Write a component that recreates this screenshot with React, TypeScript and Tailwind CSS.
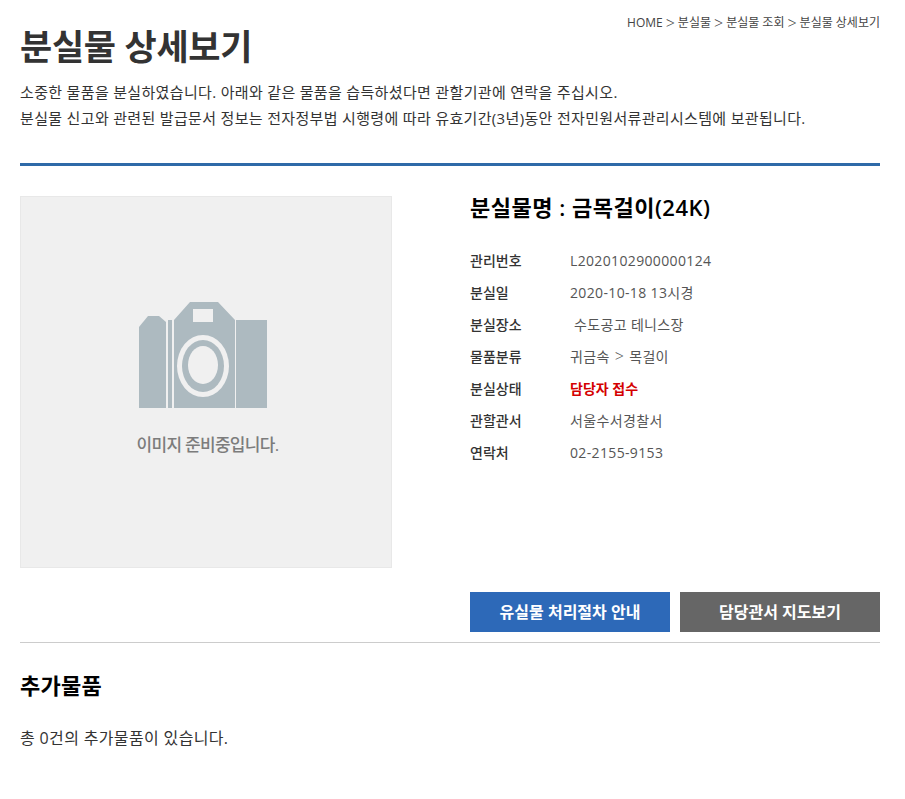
const Chevron = () => <span className="mx-[1px] text-[16px] leading-none font-light">&gt;</span>;

const rows = [
  { label: "관리번호", value: "L2020102900000124" },
  { label: "분실일", value: "2020-10-18 13시경" },
  { label: "분실장소", value: "\u00a0수도공고 테니스장" },
  {
    label: "물품분류",
    value: (
      <>
        귀금속 <Chevron /> 목걸이
      </>
    ),
  },
  { label: "분실상태", value: "담당자 접수", status: true },
  { label: "관할관서", value: "서울수서경찰서" },
  { label: "연락처", value: "02-2155-9153" },
];

function NoImage() {
  return (
    <div className="w-[372px] h-[372px] shrink-0 bg-[#f0f0f0] border border-[#e8e8e8] flex flex-col items-center pt-[105px]">
      <svg className="-ml-[5px]" width="129" height="106" viewBox="0 0 129 106" fill="#adbac0">
        <path d="M0 25 L9 14 H20 L27 20 V106 H0 Z" />
        <rect x="29" y="18" width="4" height="88" />
        <path fillRule="evenodd" d="M35 18 L51 0 H79 L96 18 V106 H35 Z M54 7 V20 H74 V7 Z" />
        <ellipse cx="64" cy="64" rx="26" ry="31" fill="#f0f0f0" />
        <ellipse cx="64" cy="64" rx="21" ry="26" fill="#adbac0" />
        <ellipse cx="64" cy="63" rx="15" ry="19" fill="#f0f0f0" />
        <rect x="97" y="18" width="31" height="88" />
      </svg>
      <p className="ml-[3px] mt-[25px] text-[17px] leading-[24px] font-medium text-[#7c7c7c] tracking-[-0.7px]">이미지 준비중입니다.</p>
    </div>
  );
}

export default function App() {
  return (
    <div className="min-h-[799px] bg-white pl-5 pr-[25px] text-[#333] font-['Open_Sans','Noto_Sans_CJK_KR',sans-serif]">
      <div className="relative pt-[22px]">
        <p className="absolute right-0 top-[14px] flex items-center gap-[2px] text-[12px] leading-[18px] text-[#444]">
          HOME <Chevron /> 분실물 <Chevron /> 분실물 조회 <Chevron /> 분실물 상세보기
        </p>
        <h1 className="text-[35px] leading-[50px] font-semibold text-[#333] tracking-[-0.3px]">분실물 상세보기</h1>
        <p className="mt-[7px] leading-[26px] text-[15px] tracking-[0.33px]">
          소중한 물품을 분실하였습니다. 아래와 같은 물품을 습득하셨다면 관할기관에 연락을 주십시오.
          <br />
          분실물 신고와 관련된 발급문서 정보는 전자정부법 시행령에 따라 유효기간(3년)동안 전자민원서류관리시스템에 보관됩니다.
        </p>
      </div>

      <div className="mt-[32px] h-[3px] bg-[#2f6aa8]" />

      <div className="mt-[30px] flex">
        <NoImage />
        <div className="ml-[78px] flex-1">
          <h2 className="text-[22px] leading-[22px] font-semibold text-black tracking-[0.5px]">분실물명 : 금목걸이(24K)</h2>
          <dl className="mt-[26px]">
            {rows.map((row) => (
              <div key={row.label} className="flex h-[32px] items-center">
                <dt className="w-[100px] font-medium text-[14px] text-[#333]">{row.label}</dt>
                <dd className={row.status ? "text-[14px] font-bold text-[#d40000]" : "text-[14px] tracking-[0.35px] text-[#555]"}>{row.value}</dd>
              </div>
            ))}
          </dl>
        </div>
      </div>

      <div className="mt-[24px] flex justify-end gap-[10px]">
        <a className="w-[200px] h-[40px] flex items-center justify-center bg-[#2d69b8] text-white text-[16px] font-semibold pb-[1px]">유실물 처리절차 안내</a>
        <a className="w-[200px] h-[40px] flex items-center justify-center bg-[#666] text-white text-[16px] font-semibold pb-[1px]">담당관서 지도보기</a>
      </div>

      <div className="mt-[10px] h-px bg-[#ccc]" />

      <h3 className="mt-[27px] text-[22px] leading-[30px] font-semibold text-black tracking-[0.3px]">추가물품</h3>
      <p className="mt-[26px] text-[16px] leading-[24px] tracking-[0.35px] text-[#333]">총 0건의 추가물품이 있습니다.</p>
    </div>
  );
}
